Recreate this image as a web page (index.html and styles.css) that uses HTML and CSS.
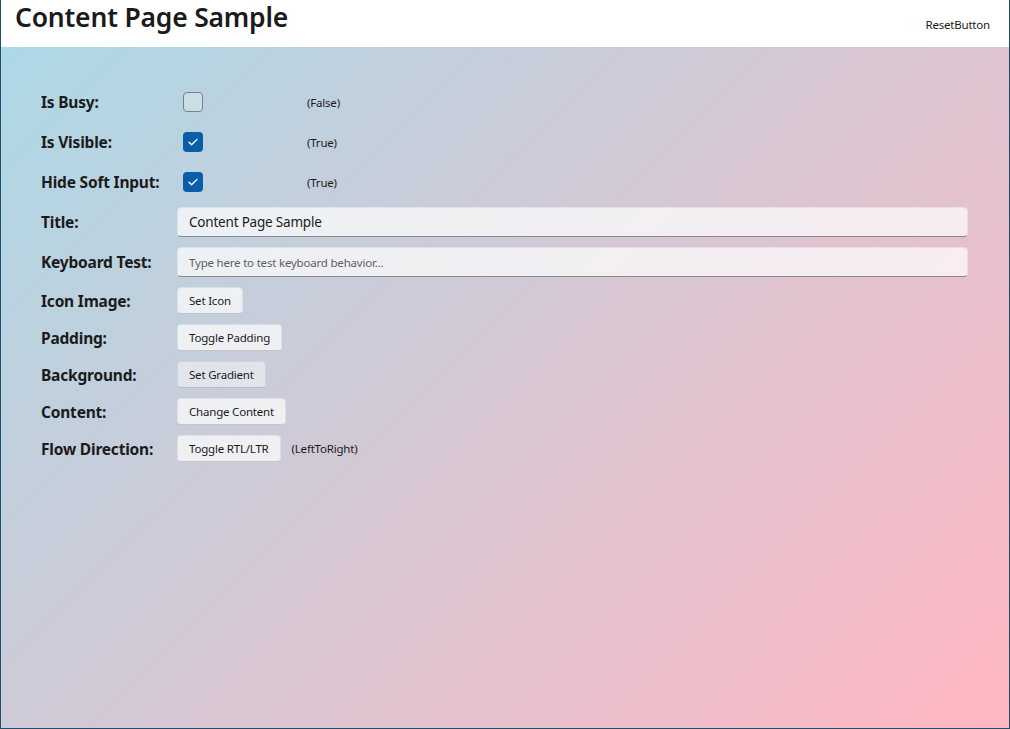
FILE: index.html
```html
<!DOCTYPE html>
<html>
<head>
<meta charset="utf-8">
<link rel="stylesheet" href="styles.css">
</head>
<body>
<div class="window">
  <header class="topbar">
    <h1 class="title">Content Page Sample</h1>
    <span class="toolbar-item">ResetButton</span>
  </header>
  <main class="content">
    <div class="form">
      <div class="label">Is Busy:</div>
      <div class="cell">
        <div class="check-wrap"><span class="check"></span></div>
        <span class="status">(False)</span>
      </div>

      <div class="label">Is Visible:</div>
      <div class="cell">
        <div class="check-wrap"><span class="check checked"><svg viewBox="0 0 20 20" width="20" height="20"><path d="M6 10.3 L8.6 12.8 L14 7.4" fill="none" stroke="#fff" stroke-width="1.3" stroke-linecap="round" stroke-linejoin="round"/></svg></span></div>
        <span class="status">(True)</span>
      </div>

      <div class="label">Hide Soft Input:</div>
      <div class="cell">
        <div class="check-wrap"><span class="check checked"><svg viewBox="0 0 20 20" width="20" height="20"><path d="M6 10.3 L8.6 12.8 L14 7.4" fill="none" stroke="#fff" stroke-width="1.3" stroke-linecap="round" stroke-linejoin="round"/></svg></span></div>
        <span class="status">(True)</span>
      </div>

      <div class="label">Title:</div>
      <div class="cell"><div class="entry">Content Page Sample</div></div>

      <div class="label">Keyboard Test:</div>
      <div class="cell"><div class="entry placeholder">Type here to test keyboard behavior...</div></div>

      <div class="label">Icon Image:</div>
      <div class="cell"><span class="btn">Set Icon</span></div>

      <div class="label">Padding:</div>
      <div class="cell"><span class="btn">Toggle Padding</span></div>

      <div class="label">Background:</div>
      <div class="cell"><span class="btn hover">Set Gradient</span></div>

      <div class="label">Content:</div>
      <div class="cell"><span class="btn">Change Content</span></div>

      <div class="label">Flow Direction:</div>
      <div class="cell"><span class="btn">Toggle RTL/LTR</span><span class="status after">(LeftToRight)</span></div>
    </div>
  </main>
</div>
</body>
</html>
```
FILE: styles.css
```css
html, body {
  margin: 0;
  padding: 0;
  width: 1010px;
  height: 729px;
  overflow: hidden;
  font-family: "Noto Sans", "Open Sans", sans-serif;
  color: #1b1b1b;
}
.window {
  box-sizing: border-box;
  width: 1010px;
  height: 729px;
  border: 1px solid #1f4f6e;
  border-top: none;
  display: flex;
  flex-direction: column;
}
.topbar {
  height: 47px;
  flex: none;
  background: #fff;
  display: flex;
  align-items: flex-start;
  justify-content: space-between;
  padding: 0 19px 0 14px;
}
.title {
  margin: 0;
  font-size: 26.5px;
  font-weight: 600;
  line-height: 34px;
  letter-spacing: -0.2px;
  color: #1b1b1b;
}
.toolbar-item {
  font-size: 11.5px;
  margin-top: 17px;
  color: #1b1b1b;
  letter-spacing: -0.2px;
}
.content {
  flex: 1;
  background: linear-gradient(135deg, #add8e6 0%, #ffb6c1 100%);
  padding: 40px 40px 0 40px;
}
.form {
  display: grid;
  grid-template-columns: 136px 791px;
  grid-template-rows: 30px 30px 30px 30px 30px 27px 27px 27px 27px 27px;
  row-gap: 10px;
}
.label {
  font-size: 15.5px;
  font-weight: 700;
  display: flex;
  align-items: center;
  letter-spacing: -0.2px;
}
.cell {
  display: flex;
  align-items: center;
}
.check-wrap {
  width: 120px;
  padding-left: 6px;
  box-sizing: border-box;
  display: flex;
  align-items: center;
}
.check {
  box-sizing: border-box;
  width: 20px;
  height: 20px;
  border-radius: 4px;
  border: 1px solid #7d7f86;
  background: rgba(255,255,255,0.25);
  display: block;
}
.check.checked {
  border: none;
  background: #0a5ea8;
}
.check svg { display: block; }
.status {
  margin-left: 10px;
  font-size: 11.5px;
  letter-spacing: -0.2px;
}
.status.after { margin-left: 11px; }
.entry {
  box-sizing: border-box;
  width: 791px;
  height: 30px;
  border-radius: 4px;
  background: rgba(255,255,255,0.7);
  border: 1px solid rgba(0,0,0,0.06);
  border-bottom: 1px solid #8a8a8a;
  padding: 0 11px;
  display: flex;
  align-items: center;
  font-size: 13.5px;
  letter-spacing: -0.2px;
}
.entry.placeholder {
  font-size: 11.5px;
  color: #5f5f5f;
}
.btn {
  box-sizing: border-box;
  height: 27px;
  border-radius: 4px;
  background: rgba(255,255,255,0.7);
  border: 1px solid rgba(0,0,0,0.07);
  border-bottom-color: rgba(0,0,0,0.18);
  padding: 0 11px;
  display: flex;
  align-items: center;
  font-size: 11.5px;
  letter-spacing: -0.2px;
}
.btn.hover {
  background: rgba(245,246,250,0.55);
}
```
